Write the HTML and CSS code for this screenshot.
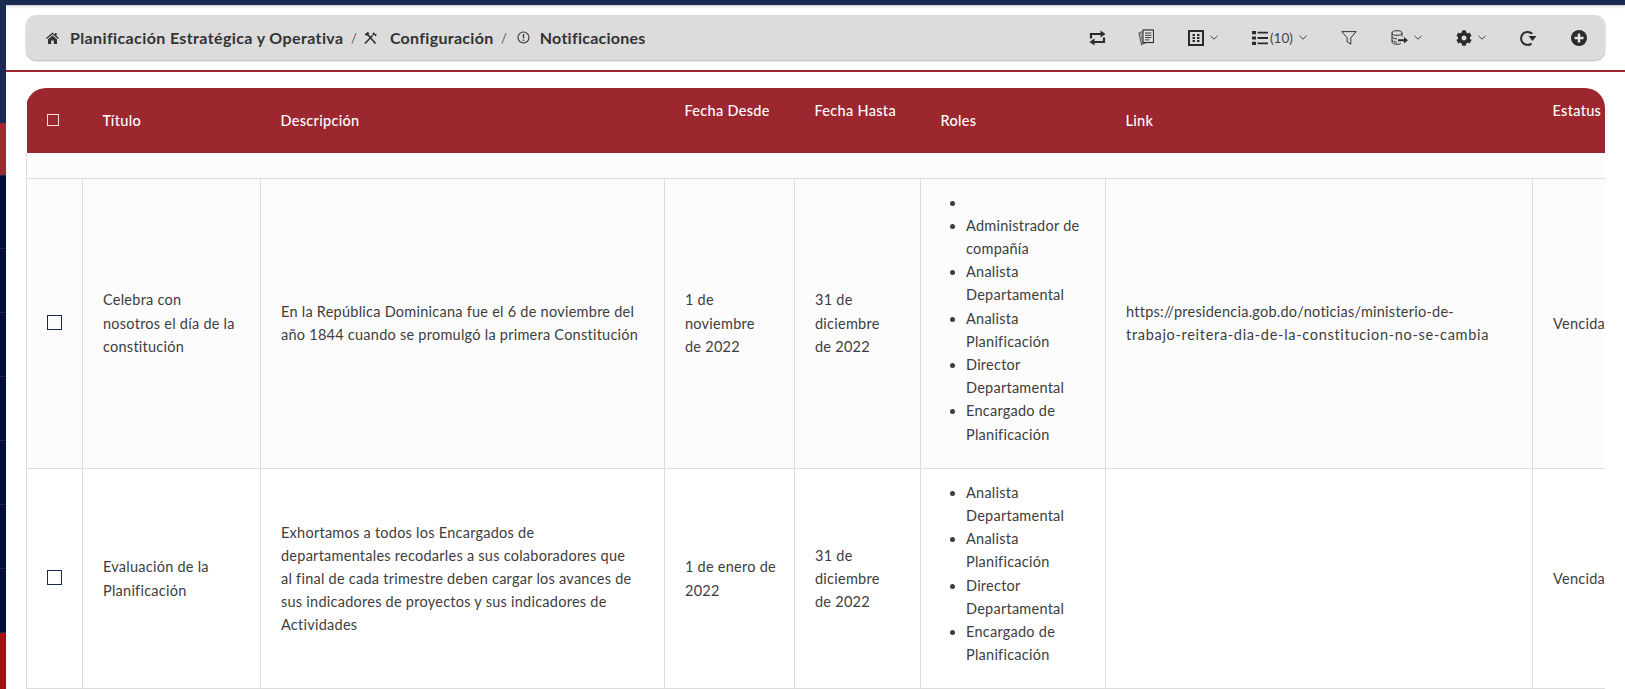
FILE: index.html
```html
<!DOCTYPE html>
<html>
<head>
    <title>Notificaciones</title>
    <link rel="stylesheet" href="styles.css">
</head>
<body>

<div class="top-band"></div>

<div class="layout">
    <div class="sidebar">
        <div class="side-head"></div>
        <div class="side-active"></div>
        <div class="side-item side-first"></div>
        <div class="side-item"></div>
        <div class="side-item"></div>
        <div class="side-item"></div>
        <div class="side-item"></div>
        <div class="side-item"></div>
        <div class="side-item"></div>
        <div class="side-bottom"></div>
    </div>

    <div class="main">
        <div class="toolbar">
            <div class="breadcrumb">
                <svg class="crumb-icon" width="13" height="12" viewBox="0 0 13 12"><path d="M6.500 0.500L0 6l.9 1L6.500 2.300 12.100 7l.9-1-2.400-2V1H9v1.700z" fill="#333"/><path d="M2 7.300L6.500 3.500 11 7.300V12H7.800V8.500H5.200V12H2z" fill="#333"/></svg>
                <span class="crumb-text crumb-first">Planificación Estratégica y Operativa</span>
                <span class="crumb-sep">/</span>
                <svg class="crumb-icon" width="15" height="14" viewBox="0 0 15 14"><path d="M2 12.500L9.500 4.500M3.800 2.500L12.500 12.500" stroke="#333" stroke-width="1.700" fill="none"/><path d="M1.500 3.500L4.500 1 6.500 2 4 5z" fill="#333"/><path d="M9 3.200L11 1 11.800 2.800 14 3.500 12 5.800 12 4.200 10.500 4.200z" fill="#333"/></svg>
                <span class="crumb-text crumb-second">Configuración</span>
                <span class="crumb-sep crumb-sep-wide">/</span>
                <svg class="crumb-icon" width="13" height="13" viewBox="0 0 13 13"><circle cx="6.500" cy="6.500" r="5.500" stroke="#333" stroke-width="1.100" fill="none"/><path d="M6.500 3v4.200M6.500 8.500v1.500" stroke="#333" stroke-width="1.300"/></svg>
                <span class="crumb-text crumb-third">Notificaciones</span>
            </div>

            <div class="tools">
                <div class="tool tool-first">
                    <svg width="17" height="16" viewBox="0 0 17 16"><path d="M2 8.500V4h10.500M15 7.500V12H4.500" stroke="#2b2b2b" stroke-width="2.200" fill="none"/><path d="M11.500 .5L16.500 4l-5 3.500zM5.500 8.500L.5 12l5 3.500z" fill="#2b2b2b"/></svg>
                </div>
                <div class="tool">
                    <svg width="16" height="17" viewBox="0 0 16 17"><path d="M4.500 2.500L1 4l2.500 11.500 4-1.500" stroke="#555" stroke-width="1.100" fill="none"/><path d="M4.500 4L2.800 4.800 4.500 14" stroke="#777" stroke-width="1" fill="none"/><rect x="5" y="1" width="10.500" height="12.500" fill="#e8e8e8" stroke="#333" stroke-width="1.200"/><path d="M7 4h6.500M7 6.300h6.500M7 8.600h6.500M7 10.900h4.500" stroke="#333" stroke-width="1"/></svg>
                </div>
                <div class="tool">
                    <svg width="16" height="16" viewBox="0 0 16 16"><rect x="1" y="1" width="14" height="14" fill="none" stroke="#2b2b2b" stroke-width="2"/><path d="M4.500 4h2.500v2h-2.500zM9 4h2.500v2H9zM4.500 7h2.500v2h-2.500zM9 7h2.500v2H9zM4.500 10h2.500v2h-2.500zM9 10h2.500v2H9z" fill="#2b2b2b"/></svg>
                    <svg class="chevron" width="8" height="5" viewBox="0 0 8 5"><path d="M.5 .8L4 4.200 7.500 .8" stroke="#444" stroke-width="1" fill="none"/></svg>
                </div>
                <div class="tool tool-list">
                    <svg width="16" height="16" viewBox="0 0 16 16"><path d="M0 1h4v3.200H0zM0 6.400h4v3.200H0zM0 11.800h4V15H0z" fill="#2b2b2b"/><path d="M5.500 2.600H16M5.500 8H16M5.500 13.400H16" stroke="#2b2b2b" stroke-width="1.800"/></svg>
                    <span class="tool-count">(10)</span>
                    <svg class="chevron" width="8" height="5" viewBox="0 0 8 5"><path d="M.5 .8L4 4.200 7.500 .8" stroke="#444" stroke-width="1" fill="none"/></svg>
                </div>
                <div class="tool">
                    <svg width="16" height="14" viewBox="0 0 16 14"><path d="M.8 .6h14.400L9.800 6.800v6.400L6.200 11V6.800z" fill="none" stroke="#333" stroke-width="1"/></svg>
                </div>
                <div class="tool">
                    <svg width="17" height="15" viewBox="0 0 17 15"><ellipse cx="6" cy="3" rx="5" ry="2.300" fill="none" stroke="#333" stroke-width="1"/><path d="M1 3v9c0 1.300 2.200 2.300 5 2.300 1.500 0 2.900-.3 3.800-.8M11 3v3.500M1 6.500c0 1.300 2.200 2.300 5 2.300M1 9.800c0 1.300 2.200 2.300 5 2.300" fill="none" stroke="#333" stroke-width="1"/><path d="M7 9.300h6V7l4 3.300-4 3.300v-2.300H7z" fill="#2b2b2b"/></svg>
                    <svg class="chevron" width="8" height="5" viewBox="0 0 8 5"><path d="M.5 .8L4 4.200 7.500 .8" stroke="#444" stroke-width="1" fill="none"/></svg>
                </div>
                <div class="tool">
                    <svg width="16" height="16" viewBox="0 0 512 512"><path fill="#2b2b2b" d="M487.4 315.7l-42.6-24.6c4.3-23.2 4.3-47 0-70.200l42.600-24.600c4.900-2.800 7.100-8.600 5.500-14-11.100-35.600-30-67.800-54.700-94.600-3.800-4.100-10-5.100-14.800-2.300L380.800 110c-17.900-15.400-38.500-27.300-60.800-35.100V25.800c0-5.600-3.900-10.500-9.400-11.700-36.700-8.200-74.300-7.800-109.200 0-5.500 1.200-9.400 6.100-9.400 11.700V75c-22.200 7.900-42.800 19.800-60.800 35.100L88.700 85.500c-4.900-2.800-11-1.900-14.800 2.300-24.700 26.700-43.600 58.900-54.700 94.600-1.700 5.400.6 11.200 5.500 14L67.300 221c-4.300 23.200-4.300 47 0 70.200l-42.600 24.600c-4.900 2.800-7.100 8.600-5.500 14 11.100 35.600 30 67.800 54.700 94.600 3.800 4.100 10 5.100 14.800 2.300l42.600-24.600c17.900 15.400 38.500 27.300 60.800 35.100v49.200c0 5.600 3.900 10.500 9.400 11.700 36.700 8.200 74.300 7.800 109.200 0 5.500-1.200 9.400-6.100 9.400-11.700v-49.200c22.200-7.900 42.800-19.800 60.800-35.100l42.600 24.600c4.900 2.800 11 1.900 14.800-2.300 24.700-26.700 43.600-58.900 54.700-94.600 1.500-5.500-.7-11.300-5.600-14.100zM256 336c-44.100 0-80-35.900-80-80s35.900-80 80-80 80 35.900 80 80-35.900 80-80 80z"/></svg>
                    <svg class="chevron" width="8" height="5" viewBox="0 0 8 5"><path d="M.5 .8L4 4.200 7.500 .8" stroke="#444" stroke-width="1" fill="none"/></svg>
                </div>
                <div class="tool">
                    <svg width="17" height="16" viewBox="0 0 17 16"><path d="M12.200 3.800A6.500 6.500 0 1 0 11.500 13.600" fill="none" stroke="#2b2b2b" stroke-width="2"/><path d="M8.500 6h8l-4 5z" fill="#2b2b2b"/></svg>
                </div>
                <div class="tool">
                    <svg width="16" height="16" viewBox="0 0 16 16"><circle cx="8" cy="8" r="8" fill="#2b2b2b"/><path d="M8 3.500v9M3.500 8h9" stroke="#e4e4e4" stroke-width="2.400"/></svg>
                </div>
            </div>
        </div>

        <div class="red-line"></div>

        <div class="table-wrap">
            <table class="data-table">
                <colgroup>
                    <col class="col-check">
                    <col class="col-title">
                    <col class="col-desc">
                    <col class="col-from">
                    <col class="col-to">
                    <col class="col-roles">
                    <col class="col-link">
                    <col class="col-status">
                </colgroup>
                <thead>
                    <tr>
                        <th class="th-check"><input type="checkbox" class="check check-head"></th>
                        <th>Título</th>
                        <th>Descripción</th>
                        <th class="th-high">Fecha Desde</th>
                        <th class="th-high">Fecha Hasta</th>
                        <th>Roles</th>
                        <th>Link</th>
                        <th class="th-high">Estatus</th>
                    </tr>
                </thead>
                <tbody>
                    <tr class="filter-row">
                        <td colspan="8"></td>
                    </tr>
                    <tr class="row-odd">
                        <td class="td-check"><input type="checkbox" class="check"></td>
                        <td>Celebra con<br>nosotros el día de la<br>constitución</td>
                        <td>En la República Dominicana fue el 6 de noviembre del<br>año 1844 cuando se promulgó la primera Constitución</td>
                        <td>1 de<br>noviembre<br>de 2022</td>
                        <td>31 de<br>diciembre<br>de 2022</td>
                        <td class="td-roles">
                            <ul>
                                <li>&nbsp;</li>
                                <li>Administrador de<br>compañía</li>
                                <li>Analista<br>Departamental</li>
                                <li>Analista<br>Planificación</li>
                                <li>Director<br>Departamental</li>
                                <li>Encargado de<br>Planificación</li>
                            </ul>
                        </td>
                        <td>https://presidencia.gob.do/noticias/ministerio-de-<br><span class="link-tail">trabajo-reitera-dia-de-la-constitucion-no-se-cambia</span></td>
                        <td>Vencida</td>
                    </tr>
                    <tr>
                        <td class="td-check"><input type="checkbox" class="check"></td>
                        <td>Evaluación de la<br>Planificación</td>
                        <td>Exhortamos a todos los Encargados de<br>departamentales recodarles a sus colaboradores que<br>al final de cada trimestre deben cargar los avances de<br>sus indicadores de proyectos y sus indicadores de<br>Actividades</td>
                        <td>1 de enero de<br>2022</td>
                        <td>31 de<br>diciembre<br>de 2022</td>
                        <td class="td-roles">
                            <ul>
                                <li>Analista<br>Departamental</li>
                                <li>Analista<br>Planificación</li>
                                <li>Director<br>Departamental</li>
                                <li>Encargado de<br>Planificación</li>
                            </ul>
                        </td>
                        <td></td>
                        <td>Vencida</td>
                    </tr>
                </tbody>
            </table>
        </div>
    </div>
</div>

</body>
</html>
```

FILE: styles.css
```css
* {
    box-sizing: border-box;
}
html, body {
    height: 100%;
}
body {
    margin: 0;
    font-family: "Lato", "Liberation Sans", sans-serif;
    font-size: 14.5px;
    color: #3d3d3d;
    background-color: #fff;
    overflow: hidden;
}

.top-band {
    height: 5px;
    background-color: #1a2a50;
    box-shadow: 0 1px 3px rgba(0, 0, 0, 0.25);
}
.layout {
    display: flex;
    height: 684px;
}

/* Sidebar strip */
.sidebar {
    width: 6px;
    flex-shrink: 0;
    display: flex;
    flex-direction: column;
    background-color: #020c3c;
}
.side-head {
    height: 118px;
    background-color: #1a2a50;
}
.side-active {
    height: 53px;
    background-color: #9e2a2f;
    border-bottom: 1px solid #1a2a50;
}
.side-item {
    height: 64px;
    border-bottom: 1px solid #1c2750;
}
.side-first {
    height: 73px;
}
.side-bottom {
    flex: 1;
    background-color: #a50f15;
}

.main {
    flex: 1;
    min-width: 0;
    padding: 10px 0 0 0;
}

/* Toolbar */
.toolbar {
    height: 45px;
    margin: 0 20px;
    padding: 0 18px 0 20px;
    display: flex;
    align-items: center;
    justify-content: space-between;
    background-color: #dcdcdc;
    border-radius: 10px;
    box-shadow: 0 1px 2px rgba(0, 0, 0, 0.3);
}
.breadcrumb {
    display: flex;
    align-items: center;
    font-size: 16px;
    font-weight: 700;
    color: #333;
}
.crumb-icon {
    flex-shrink: 0;
}
.crumb-text {
    margin-left: 11px;
    white-space: nowrap;
}
.crumb-first {
    width: 274px;
    letter-spacing: 0.38px;
}
.crumb-second {
    margin-left: 12px;
    width: 104px;
    letter-spacing: 0.3px;
}
.crumb-third {
    margin-left: 10px;
    width: 105px;
    letter-spacing: 0.25px;
}
.crumb-sep {
    margin: 0 6px 0 7px;
    font-weight: 400;
    font-size: 13px;
    color: #555;
}
.crumb-sep-wide {
    margin: 0 10px 0 7px;
}
.tools {
    display: flex;
    align-items: center;
    gap: 34px;
}
.tool {
    display: flex;
    align-items: center;
}
.tool-first {
    margin-right: -2px;
}
.tool .chevron {
    margin-left: 6px;
}
.tool-count {
    margin-left: 2px;
    width: 23px;
    font-size: 13.5px;
    color: #444;
}

.red-line {
    height: 2px;
    margin-top: 10px;
    background-color: #9e2a2f;
}

/* Table */
.table-wrap {
    margin: 16px 20px 0 20px;
    border-radius: 20px 20px 0 0;
    overflow: hidden;
}
.data-table {
    width: 1617px;
    table-layout: fixed;
    border-collapse: collapse;
    line-height: 23.2px;
}
.col-check { width: 56px; }
.col-title { width: 178px; }
.col-desc { width: 404px; }
.col-from { width: 130px; }
.col-to { width: 126px; }
.col-roles { width: 185px; }
.col-link { width: 427px; }
.col-status { width: 111px; }

.data-table th {
    height: 65px;
    padding: 0 20px;
    text-align: left;
    font-weight: 500;
    font-size: 14.5px;
    letter-spacing: 0.3px;
    color: #fff;
    background-color: #9c272e;
    white-space: nowrap;
}
.data-table th.th-high {
    padding-bottom: 19px;
}
.data-table th.th-check {
    padding-bottom: 2px;
}
.data-table td {
    padding: 0 20px;
    border: 1px solid #ddd;
    vertical-align: middle;
    background-color: #fff;
    letter-spacing: 0.25px;
    white-space: nowrap;
}
.data-table td.td-check {
    padding-bottom: 2px;
}
.data-table td.td-roles {
    padding: 12px 0 22px 0;
}
.data-table .row-odd td {
    background-color: #fcfcfc;
}
.data-table .filter-row td {
    height: 25px;
    background-color: #fcfcfc;
    border-top: 0;
}
.td-roles ul {
    margin: 0;
    padding: 0 0 0 45px;
}
.link-tail {
    letter-spacing: 0.7px;
}

.check {
    display: block;
    width: 15px;
    height: 15px;
    margin: 0;
    appearance: none;
    background: transparent;
    border: 1px solid #1a2a50;
}
.check-head {
    width: 12px;
    height: 12px;
    border: 1.5px solid #f3dfe0;
}
```
